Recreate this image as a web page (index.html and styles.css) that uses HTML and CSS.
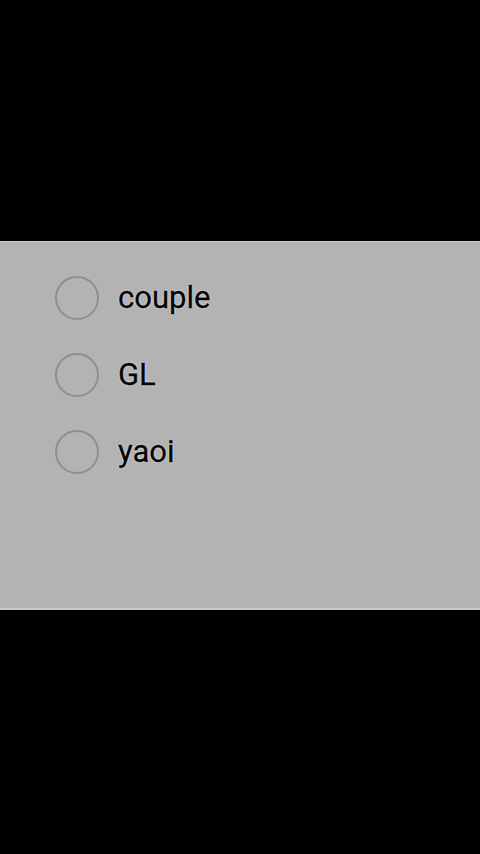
FILE: index.html
```html
<!DOCTYPE html>
<html>
<head>
<meta charset="utf-8">
<link rel="stylesheet" href="styles.css">
</head>
<body>
<div class="screen">
  <div class="spacer-top"></div>
  <div class="panel">
    <div class="option"><span class="radio"></span><span class="label">couple</span></div>
    <div class="option"><span class="radio"></span><span class="label">GL</span></div>
    <div class="option"><span class="radio"></span><span class="label">yaoi</span></div>
  </div>
</div>
</body>
</html>
```

FILE: styles.css
```css
html, body {
  margin: 0;
  padding: 0;
  background: #000;
}
.screen {
  width: 480px;
  height: 854px;
  display: flex;
  flex-direction: column;
  background: #000;
}
.spacer-top {
  height: 241px;
}
.panel {
  height: 369px;
  background: #b3b3b3;
  border-top: 1px solid #c8c8c8;
  border-bottom: 2px solid #c8c8c8;
  box-sizing: border-box;
  padding: 34px 0 0 55px;
  display: flex;
  flex-direction: column;
  gap: 33px;
}
.option {
  display: flex;
  align-items: center;
  gap: 19px;
  height: 44px;
}
.radio {
  width: 40px;
  height: 40px;
  border: 2px solid #8e8e8e;
  border-radius: 50%;
  flex: none;
}
.label {
  font-family: Roboto, "Noto Sans", sans-serif;
  font-size: 31px;
  color: #050505;
  -webkit-text-stroke: 0.4px #050505;
  text-shadow: 0 0 2px #fff, 0 0 1px #fff;
  position: relative;
  top: -1px;
}
```
